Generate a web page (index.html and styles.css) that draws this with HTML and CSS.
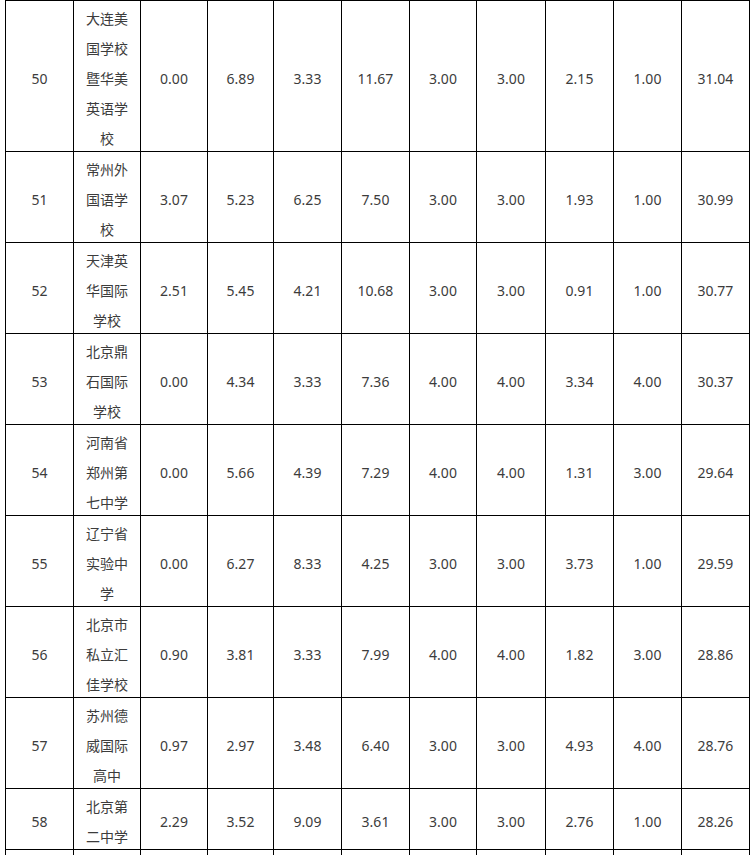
FILE: index.html
```html
<!DOCTYPE html>
<html lang="zh">
<head>
<meta charset="utf-8">
<link rel="stylesheet" href="styles.css">
</head>
<body>
<div class="page">
<table class="rank">
<colgroup>
<col class="c68"><col class="c67"><col class="c67"><col class="c66"><col class="c68"><col class="c68"><col class="c67"><col class="c69"><col class="c68"><col class="c68"><col class="c68">
</colgroup>
<tbody>
<tr><td><div class="t">50</div></td><td><div class="t">大连美国学校暨华美英语学校</div></td><td><div class="t">0.00</div></td><td><div class="t">6.89</div></td><td><div class="t">3.33</div></td><td><div class="t">11.67</div></td><td><div class="t">3.00</div></td><td><div class="t">3.00</div></td><td><div class="t">2.15</div></td><td><div class="t">1.00</div></td><td><div class="t">31.04</div></td></tr>
<tr><td><div class="t">51</div></td><td><div class="t">常州外国语学校</div></td><td><div class="t">3.07</div></td><td><div class="t">5.23</div></td><td><div class="t">6.25</div></td><td><div class="t">7.50</div></td><td><div class="t">3.00</div></td><td><div class="t">3.00</div></td><td><div class="t">1.93</div></td><td><div class="t">1.00</div></td><td><div class="t">30.99</div></td></tr>
<tr><td><div class="t">52</div></td><td><div class="t">天津英华国际学校</div></td><td><div class="t">2.51</div></td><td><div class="t">5.45</div></td><td><div class="t">4.21</div></td><td><div class="t">10.68</div></td><td><div class="t">3.00</div></td><td><div class="t">3.00</div></td><td><div class="t">0.91</div></td><td><div class="t">1.00</div></td><td><div class="t">30.77</div></td></tr>
<tr><td><div class="t">53</div></td><td><div class="t">北京鼎石国际学校</div></td><td><div class="t">0.00</div></td><td><div class="t">4.34</div></td><td><div class="t">3.33</div></td><td><div class="t">7.36</div></td><td><div class="t">4.00</div></td><td><div class="t">4.00</div></td><td><div class="t">3.34</div></td><td><div class="t">4.00</div></td><td><div class="t">30.37</div></td></tr>
<tr><td><div class="t">54</div></td><td><div class="t">河南省郑州第七中学</div></td><td><div class="t">0.00</div></td><td><div class="t">5.66</div></td><td><div class="t">4.39</div></td><td><div class="t">7.29</div></td><td><div class="t">4.00</div></td><td><div class="t">4.00</div></td><td><div class="t">1.31</div></td><td><div class="t">3.00</div></td><td><div class="t">29.64</div></td></tr>
<tr><td><div class="t">55</div></td><td><div class="t">辽宁省实验中学</div></td><td><div class="t">0.00</div></td><td><div class="t">6.27</div></td><td><div class="t">8.33</div></td><td><div class="t">4.25</div></td><td><div class="t">3.00</div></td><td><div class="t">3.00</div></td><td><div class="t">3.73</div></td><td><div class="t">1.00</div></td><td><div class="t">29.59</div></td></tr>
<tr><td><div class="t">56</div></td><td><div class="t">北京市私立汇佳学校</div></td><td><div class="t">0.90</div></td><td><div class="t">3.81</div></td><td><div class="t">3.33</div></td><td><div class="t">7.99</div></td><td><div class="t">4.00</div></td><td><div class="t">4.00</div></td><td><div class="t">1.82</div></td><td><div class="t">3.00</div></td><td><div class="t">28.86</div></td></tr>
<tr><td><div class="t">57</div></td><td><div class="t">苏州德威国际高中</div></td><td><div class="t">0.97</div></td><td><div class="t">2.97</div></td><td><div class="t">3.48</div></td><td><div class="t">6.40</div></td><td><div class="t">3.00</div></td><td><div class="t">3.00</div></td><td><div class="t">4.93</div></td><td><div class="t">4.00</div></td><td><div class="t">28.76</div></td></tr>
<tr><td><div class="t">58</div></td><td><div class="t">北京第二中学</div></td><td><div class="t">2.29</div></td><td><div class="t">3.52</div></td><td><div class="t">9.09</div></td><td><div class="t">3.61</div></td><td><div class="t">3.00</div></td><td><div class="t">3.00</div></td><td><div class="t">2.76</div></td><td><div class="t">1.00</div></td><td><div class="t">28.26</div></td></tr>
<tr class="tail"><td></td><td></td><td></td><td></td><td></td><td></td><td></td><td></td><td></td><td></td><td></td></tr>
</tbody>
</table>
</div>
</body>
</html>
```
FILE: styles.css
```css
html, body {
  margin: 0;
  padding: 0;
  background: #ffffff;
}
body {
  font-family: "Noto Sans", "Noto Sans CJK SC", sans-serif;
  color: #3c3c3c;
  font-size: 14px;
}
.page {
  padding-left: 5px;
  width: 745px;
}
.rank {
  border-collapse: collapse;
  table-layout: fixed;
  width: 745px;
}
.c66 { width: 66px; }
.c67 { width: 67px; }
.c68 { width: 68px; }
.c69 { width: 69px; }
.rank td {
  border: 1px solid #000;
  padding: 0 12px;
  line-height: 30px;
  text-align: center;
  vertical-align: middle;
  word-break: break-all;
}
.t {
  padding-top: 3px;
  margin-bottom: -3px;
}
.tail td {
  height: 30px;
}
```
